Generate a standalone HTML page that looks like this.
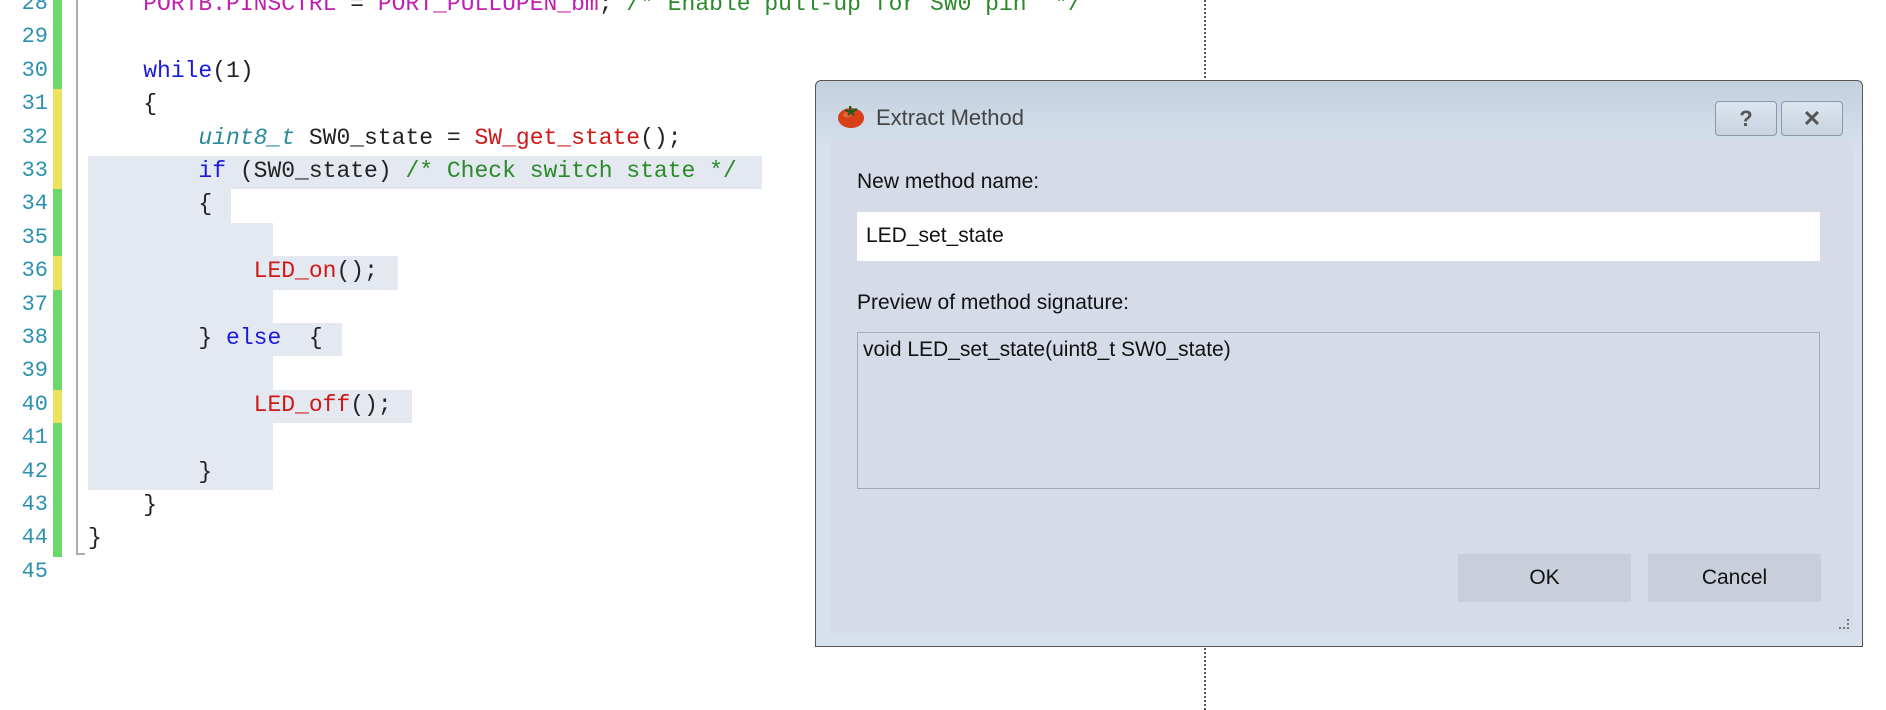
<!DOCTYPE html>
<html><head><meta charset="utf-8"><style>
body{margin:0;width:1886px;height:710px;background:#fff;position:relative;overflow:hidden;font-family:"Liberation Mono",monospace}
.ln{position:absolute;left:0;width:48px;text-align:right;color:#2b91af;font-size:22px;line-height:33.4px;height:33.4px}
.g{position:absolute;left:53px;width:9px;height:33.4px}
.code{position:absolute;left:88px;font-size:23px;line-height:33.4px;height:33.4px;white-space:pre;color:#222}
.hl{position:absolute;left:88px;background:#e4e8f0;height:33.4px}
.k{color:#1a1adc}.m{color:#c020b0}.f{color:#d01818}.c{color:#2a8a2a}.t{color:#2a8a9a;font-style:italic}
.dlg{position:absolute;left:815px;top:80px;width:1046px;height:565px;border:1px solid #555;border-radius:6px 6px 0 0;background:linear-gradient(#c3d0dd,#d6e1ed 70px,#d6e1ed);font-family:"Liberation Sans",sans-serif}
.in{position:absolute;left:15px;top:60px;width:1022px;height:492px;background:#d5dbe7}
.lbl{position:absolute;font-size:21px;color:#111}
.btn{position:absolute;background:#c9cedb;font-size:21px;text-align:center;line-height:48px;height:48px;width:173px;color:#111}
.tb{position:absolute;top:20px;width:60px;height:33px;border:1px solid #8a97a8;border-radius:4px;background:linear-gradient(#dce5ef,#c8d3df);text-align:center;font-size:22px;line-height:33px;color:#555;font-weight:bold}
</style></head><body>
<div style="position:absolute;left:1204px;top:0;height:710px;border-left:2px dotted #555"></div>
<div style="position:absolute;left:76px;top:0;width:7px;height:553px;border-left:2px solid #aaa;border-bottom:2px solid #aaa"></div>

<div class="hl" style="top:156px;width:674px"></div>
<div class="hl" style="top:189.4px;width:143px"></div>
<div class="hl" style="top:222.8px;width:185px;height:267.2px"></div>
<div class="hl" style="top:256.2px;width:310px"></div>
<div class="hl" style="top:323px;width:254px"></div>
<div class="hl" style="top:389.8px;width:324px"></div>
<div class="hl" style="top:456.6px;width:125px"></div>

<div id="lines"></div>
<script>
var cols={28:'#6ad86a',29:'#6ad86a',30:'#6ad86a',31:'#f0e060',32:'#f0e060',33:'#f0e060',34:'#6ad86a',35:'#6ad86a',36:'#f0e060',37:'#6ad86a',38:'#6ad86a',39:'#6ad86a',40:'#f0e060',41:'#6ad86a',42:'#6ad86a',43:'#6ad86a',44:'#6ad86a'};
var code={
28:'    <span class="m">PORTB.PINSCTRL</span> = <span class="m">PORT_PULLUPEN_bm</span>; <span class="c">/* Enable pull-up for SW0 pin  */</span>',
30:'    <span class="k">while</span>(1)',
31:'    {',
32:'        <span class="t">uint8_t</span> SW0_state = <span class="f">SW_get_state</span>();',
33:'        <span class="k">if</span> (SW0_state) <span class="c">/* Check switch state */</span>',
34:'        {',
36:'            <span class="f">LED_on</span>();',
38:'        } <span class="k">else</span>  {',
40:'            <span class="f">LED_off</span>();',
42:'        }',
43:'    }',
44:'}'};
var h='';
for(var n=28;n<=45;n++){var y=156+(n-33)*33.4-2;
h+='<div class="ln" style="top:'+y+'px">'+n+'</div>';
if(cols[n])h+='<div class="g" style="top:'+(y+2)+'px;background:'+cols[n]+'"></div>';
if(code[n])h+='<div class="code" style="top:'+(y+1)+'px">'+code[n]+'</div>';}
document.getElementById('lines').innerHTML=h;
</script>

<div class="dlg">
<svg style="position:absolute;left:20px;top:21px" width="32" height="28" viewBox="0 0 32 28"><ellipse cx="15" cy="16" rx="13" ry="10" fill="#d8401a"/><ellipse cx="11" cy="13" rx="4" ry="2.5" fill="#f08060" opacity=".6"/><path d="M9 8 L15 10 L21 7 M15 10 L14 4 M15 10 L12 13 M15 10 L18 13" stroke="#1c5a1c" stroke-width="2.2" fill="none"/></svg>
<div style="position:absolute;left:60px;top:24px;font-size:22px;color:#444">Extract Method</div>
<div class="tb" style="left:899px">?</div>
<div class="tb" style="left:965px">✕</div>
<div class="in">
<div class="lbl" style="left:26px;top:29px">New method name:</div>
<div style="position:absolute;left:26px;top:71px;width:963px;height:49px;background:#fff"></div>
<div class="lbl" style="left:35px;top:83px">LED_set_state</div>
<div class="lbl" style="left:26px;top:150px">Preview of method signature:</div>
<div style="position:absolute;left:26px;top:191px;width:961px;height:155px;border:1px solid #a3aab6"></div>
<div class="lbl" style="left:32px;top:197px">void LED_set_state(uint8_t SW0_state)</div>
<div class="btn" style="left:627px;top:413px">OK</div>
<div class="btn" style="left:817px;top:413px">Cancel</div>
<div style="position:absolute;right:4px;bottom:4px;width:8px;height:8px;border-right:2px dotted #777;border-bottom:2px dotted #777"></div>
</div></div>
</body></html>
